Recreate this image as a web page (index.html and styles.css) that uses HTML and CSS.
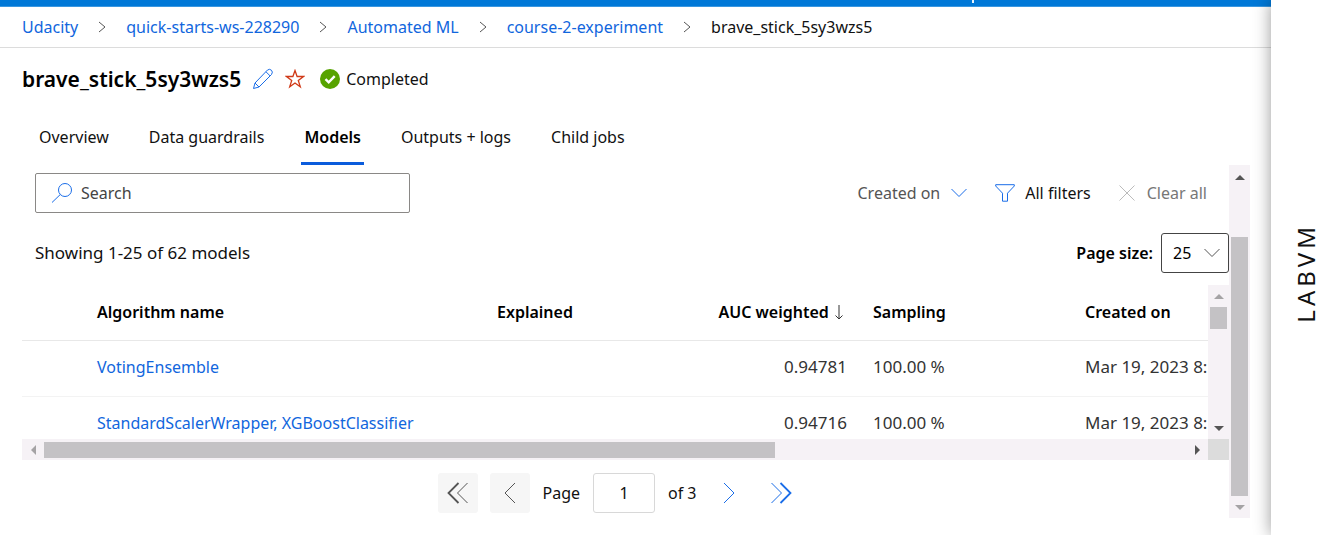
FILE: index.html
```html
<!DOCTYPE html>
<html lang="en">
<head>
<meta charset="utf-8">
<title>brave_stick_5sy3wzs5 - Models</title>
<link rel="stylesheet" href="styles.css">
</head>
<body>
<div class="app">
<main class="main">
  <div class="topbar"><span class="topbar-mark"></span></div>
  <nav class="breadcrumbs" aria-label="Breadcrumb">
    <a href="#">Udacity</a>
    <svg class="sep" viewBox="0 0 8 12"><path d="M1 1l6 5-6 5"/></svg>
    <a href="#">quick-starts-ws-228290</a>
    <svg class="sep" viewBox="0 0 8 12"><path d="M1 1l6 5-6 5"/></svg>
    <a href="#">Automated ML</a>
    <svg class="sep" viewBox="0 0 8 12"><path d="M1 1l6 5-6 5"/></svg>
    <a href="#">course-2-experiment</a>
    <svg class="sep" viewBox="0 0 8 12"><path d="M1 1l6 5-6 5"/></svg>
    <span>brave_stick_5sy3wzs5</span>
  </nav>
  <header class="title-row">
    <h1>brave_stick_5sy3wzs5</h1>
    <button class="icon-btn" aria-label="Edit name"><svg class="blue" width="22" height="22" viewBox="0 0 22 22"><path d="M1.500 20.500l1.500-5.500L15.500 2q2-1.500 3.900.2T19.500 6.500L7 19zM3 15l4 4M14 3.800l4.200 4.200"/></svg></button>
    <button class="icon-btn" aria-label="Favorite"><svg class="red" width="20" height="20" viewBox="0 0 20 20"><path d="M10 1.500l2.100 6h6.400l-5.200 3.900 2 6.400L10 14l-5.300 3.800 2-6.400L1.500 7.500h6.400z"/></svg></button>
    <span class="status"><svg width="20" height="20" viewBox="0 0 20 20"><circle cx="10" cy="10" r="10" fill="#57a300" stroke="none"/><path d="M5.500 10.200l3.200 3.200 6-6.200" fill="none" stroke="#fff" stroke-width="2.400"/></svg>Completed</span>
  </header>
  <nav class="tabs" aria-label="Job sections">
    <button>Overview</button>
    <button>Data guardrails</button>
    <button class="active">Models</button>
    <button>Outputs + logs</button>
    <button>Child jobs</button>
  </nav>
  <div class="pane">
    <section class="content">
      <div class="toolbar">
        <label class="search"><svg class="blue" width="22" height="20" viewBox="0 0 22 20"><circle cx="14" cy="7" r="6.500"/><path d="M9.300 11.500L1 19.500"/></svg><input type="text" placeholder="Search" aria-label="Search"></label>
        <div class="filters">
          <button class="sort">Created on<svg class="blue" width="16" height="10" viewBox="0 0 16 10"><path d="M.5 1L8 8.500 15.500 1"/></svg></button>
          <button class="all"><svg class="blue" width="20" height="18" viewBox="0 0 20 18"><path d="M.7.700h18.600v1.300L12.500 9.200v8h-5v-8L.7 2z"/></svg>All filters</button>
          <button class="clear" disabled><svg width="16" height="16" viewBox="0 0 16 16"><path d="M.5.500l15 15M15.500.500l-15 15"/></svg>Clear all</button>
        </div>
      </div>
      <div class="summary">
        <span class="count">Showing 1-25 of 62 models</span>
        <div class="page-size"><label for="size">Page size:</label>
          <span class="select"><select id="size"><option>25</option><option>50</option></select><svg width="16" height="10" viewBox="0 0 16 10"><path d="M.5 1L8 8.500 15.500 1"/></svg></span>
        </div>
      </div>
      <div class="grid">
        <div class="grid-view">
          <table>
            <colgroup><col class="c-pick"><col class="c-name"><col class="c-exp"><col class="c-auc"><col class="c-samp"><col class="c-date"></colgroup>
            <thead><tr><th></th><th>Algorithm name</th><th>Explained</th><th class="num">AUC weighted <svg class="arrow" width="8" height="15" viewBox="0 0 8 15"><path d="M4 0v14M.5 10.500L4 14l3.500-3.500"/></svg></th><th>Sampling</th><th>Created on</th></tr></thead>
            <tbody>
              <tr><td></td><td><a href="#">VotingEnsemble</a></td><td></td><td class="num">0.94781</td><td>100.00 %</td><td>Mar 19, 2023 8:</td></tr>
              <tr><td></td><td><a href="#">StandardScalerWrapper, XGBoostClassifier</a></td><td></td><td class="num">0.94716</td><td>100.00 %</td><td>Mar 19, 2023 8:</td></tr>
            </tbody>
          </table>
        </div>
        <div class="vbar"><i class="up dim"></i><b class="thumb-small"></b><i class="down"></i></div>
        <div class="hbar"><i class="left dim"></i><div class="htrack"><b></b></div><i class="right"></i></div>
        <div class="corner"></div>
      </div>
      <div class="pager">
        <button class="off" disabled aria-label="First page"><svg width="22" height="22" viewBox="0 0 22 22"><path d="M11.500 1l-10 10 10 10" stroke-width="1.800"/><path d="M20.500 1l-10 10 10 10"/></svg></button>
        <button class="off prev" disabled aria-label="Previous page"><svg width="22" height="22" viewBox="0 0 22 22"><path d="M16 1L6 11l10 10"/></svg></button>
        <label for="page">Page</label>
        <input id="page" type="text" value="1">
        <span>of 3</span>
        <button class="next" aria-label="Next page"><svg class="blue" width="22" height="22" viewBox="0 0 22 22"><path d="M6 1l10 10L6 21"/></svg></button>
        <button class="last" aria-label="Last page"><svg class="blue" width="22" height="22" viewBox="0 0 22 22"><path d="M1.500 1l10 10-10 10"/><path d="M10.500 1l10 10-10 10" stroke-width="1.800"/></svg></button>
      </div>
    </section>
    <div class="vbar outer"><i class="up"></i><b class="thumb-large"></b><i class="down dim"></i></div>
  </div>
</main>
<aside class="side"><span>LABVM</span></aside>
</div>
</body>
</html>
```
FILE: styles.css
```css
* { box-sizing: border-box; }
body { margin: 0; background: #fff; color: #111; font: 16px/20px "Noto Sans", "Open Sans", sans-serif; }
button, input, select { font: inherit; color: inherit; background: none; border: 0; padding: 0; margin: 0; }
a { color: #1166dd; text-decoration: none; }
svg { display: block; flex: none; fill: none; stroke: #555; stroke-width: 1; }
svg.blue { stroke: #1a6de8; }
svg.red { stroke: #d03a18; stroke-width: 1.3; }

.app { display: flex; min-height: 100vh; overflow: hidden; }
.main { flex: 1; min-width: 0; }
.side { position: relative; width: 53px; padding: 10px 0 0 16px; background: #fff; box-shadow: 0 0 16px rgba(0, 0, 0, .4); display: flex; align-items: center; justify-content: center; }
.side span { writing-mode: vertical-rl; transform: rotate(180deg); font-size: 24px; line-height: 32px; letter-spacing: 4px; }

.topbar { height: 7px; background: #0078d7; border-bottom: 1px solid #3a97e0; display: flex; justify-content: center; padding-left: 674px; }
.topbar-mark { width: 2px; height: 3px; background: #e8f3fc; }
.breadcrumbs { display: flex; align-items: center; height: 41px; padding-left: 22px; border-bottom: 1px solid #dcdcdc; white-space: nowrap; }
.sep { width: 8px; height: 12px; margin: 0 20px; }
.title-row { display: flex; align-items: center; height: 62px; padding: 0 22px; }
h1 { margin: 0; font-size: 21px; line-height: 28px; font-weight: 600; color: #000; }
.icon-btn { margin-left: 11px; }
.status { display: flex; align-items: center; gap: 6px; margin-left: 15px; }
.tabs { display: flex; gap: 34px; height: 55px; padding-left: 36px; white-space: nowrap; }
.tabs button { padding: 2px 3px 0; border-bottom: 3px solid transparent; }
.tabs .active { font-weight: 600; border-color: #0b5cdc; color: #000; }

.pane { display: grid; grid-template-columns: minmax(0, 1fr) 21px; padding: 0 21px 0 22px; }
.content { min-width: 0; padding-bottom: 5px; }
.toolbar, .summary { display: flex; align-items: center; justify-content: space-between; height: 40px; margin-left: 13px; }
.toolbar { margin-top: 8px; }
.summary { margin-top: 20px; margin-bottom: 12px; }
.count { font-size: 17px; }
.search { display: flex; align-items: center; gap: 8px; width: 375px; height: 40px; padding-left: 15px; border: 1px solid #8a8886; border-radius: 2px; }
.search input { flex: 1; min-width: 0; outline: 0; }
.search input::placeholder { color: #444; opacity: 1; }
.filters { display: flex; gap: 28px; padding-right: 22px; }
.filters button { display: flex; align-items: center; gap: 11px; white-space: nowrap; }
.filters .sort { color: #555; }
.filters .all { gap: 10px; }
.filters .clear { color: #777; gap: 12px; }
.clear svg { stroke: #bbb; }
.page-size { display: flex; align-items: center; gap: 8px; font-weight: 600; color: #000; }
.select { position: relative; width: 68px; height: 40px; font-weight: 400; }
.select select { appearance: none; width: 100%; height: 100%; padding-left: 11px; border: 1px solid #444; border-radius: 3px; }
.select svg { position: absolute; right: 9px; top: 15px; pointer-events: none; }

.grid { display: grid; grid-template-columns: minmax(0, 1fr) 21px; }
.grid-view { height: 154px; overflow: hidden; }
table { table-layout: fixed; width: 1300px; border-collapse: collapse; white-space: nowrap; color: #333; }
.c-pick { width: 62px; }
.c-name { width: 400px; }
.c-exp { width: 190px; }
.c-auc { width: 186px; }
.c-samp { width: 212px; }
th, td { height: 56px; padding: 0 13px; text-align: left; border-bottom: 1px solid #f3f3f3; }
td { padding-bottom: 2px; font-size: 17px; }
td a { font-size: 16px; }
th { height: 55px; color: #000; font-weight: 600; border-color: #e8e8e8; }
.num { text-align: right; }
.arrow { display: inline-block; vertical-align: -2px; margin: 0 4px 0 2px; stroke: #333; }

.vbar { display: flex; flex-direction: column; align-items: center; background: #f6f2f6; }
.vbar b { display: block; width: 17px; background: #c4c2c5; }
.thumb-small { height: 22px; }
.vbar i { display: flex; align-items: center; justify-content: center; height: 22px; }
.vbar .down { margin-top: auto; }
.outer .up { height: 24px; }
.thumb-large { margin-top: 48px; flex: 1; }
.outer .down { margin-top: 0; }
.vbar i::before, .hbar i::before { content: ""; border: 5px solid transparent; }
.vbar .up::before { border-bottom-color: #555; border-top: 0; }
.vbar .down::before { border-top-color: #555; border-bottom: 0; }
.vbar .up.dim::before { border-bottom-color: #a5a3a5; }
.vbar .down.dim::before { border-top-color: #a5a3a5; }
.hbar { display: flex; align-items: center; height: 21px; background: #f6f2f6; }
.hbar i { display: flex; justify-content: center; width: 22px; }
.hbar .left::before { border-right-color: #a5a3a5; border-left: 0; }
.hbar .right::before { border-left-color: #555; border-right: 0; }
.htrack { flex: 1; height: 16px; }
.htrack b { display: block; width: 64%; height: 16px; background: #c4c2c5; }
.corner { background: #dcdcdc; }

.pager { display: flex; align-items: center; justify-content: center; height: 40px; margin-top: 13px; padding-right: 12px; }
.pager button { display: flex; align-items: center; justify-content: center; width: 40px; height: 40px; border-radius: 3px; }
.pager .off { background: #f6f6f6; }
.pager .prev { margin: 0 12px; }
.pager input { width: 62px; height: 40px; margin: 0 13px; border: 1px solid #d8d8d8; border-radius: 3px; text-align: center; }
.pager .next { margin: 0 12px; }
```
